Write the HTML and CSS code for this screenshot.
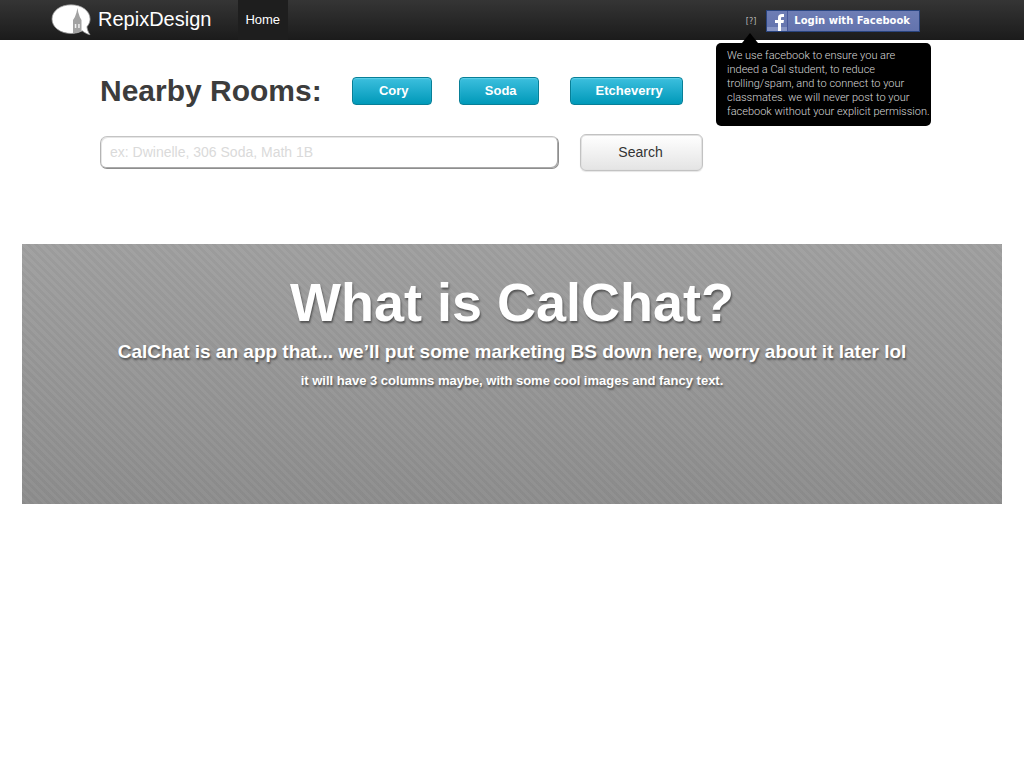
FILE: index.html
```html
<!DOCTYPE html>
<html lang="en">
<head>
<meta charset="utf-8">
<meta name="viewport" content="width=device-width, initial-scale=1">
<title>CalChat</title>
<link rel="stylesheet" href="styles.css">
</head>
<body>
<header class="topbar">
  <a class="brand" href="#">
    <svg class="brand-logo" width="41" height="32" viewBox="0 0 41 32" aria-hidden="true">
      <path d="M20 .8C9.500.8 1 6.800 1 15.100S9.500 29.500 20 29.500c4.200 0 8-1 11.200-2.700 2.300 1.800 4.500 3.200 7.800 3.900-1.700-2.200-2.700-5-3.100-7.900 2-2.300 3.200-5 3.200-7.700C39.100 6.800 30.700.8 20 .8z" fill="#fff" stroke="#999" stroke-width=".8"/>
      <path d="M26.400 4L25.500 8.500l-1.600 4.500-1.900 3v13.200l4.500-.5 4-1.500V16l-1.700-3-1.500-4.500z" fill="#a2a2a2"/>
      <path d="M23.800 20h1.500v4h-1.500zM27.200 20h1.500v4h-1.500z" fill="#f0f0f0"/>
    </svg>
    <span>RepixDesign</span>
  </a>
  <nav class="nav"><a class="nav-link" href="#">Home</a></nav>
  <div class="login">
    <button class="help" type="button" aria-describedby="login-tip">[?]</button>
    <button class="facebook" type="button">
      <svg width="21" height="20" viewBox="0 0 21 20" aria-hidden="true">
        <path d="M0 16h20v4H0z" fill="#8795c4"/>
        <path d="M20.500 0v20" stroke="#47589a"/>
        <path d="M11 20v-8H8V9h3V7c0-3 1.500-4 4-4h2v3h-1.500c-1.200 0-1.500.4-1.500 1.500V9h3l-.5 3H14v8z" fill="#fff"/>
      </svg>
      <span class="facebook-label">Login with Facebook</span>
    </button>
    <p class="tip" id="login-tip" role="tooltip">We use facebook to ensure you are<br>indeed a Cal student, to reduce<br>trolling/spam, and to connect to your<br>classmates. we will never post to your<br>facebook without your explicit permission.</p>
  </div>
</header>
<main>
  <section class="finder">
    <div class="rooms">
      <h1 class="rooms-title">Nearby Rooms:</h1>
      <button class="room" type="button">Cory</button>
      <button class="room" type="button">Soda</button>
      <button class="room room-wide" type="button">Etcheverry</button>
    </div>
    <form class="search">
      <input class="search-box" type="text" aria-label="Search rooms" placeholder="ex: Dwinelle, 306 Soda, Math 1B">
      <button class="search-button" type="button">Search</button>
    </form>
  </section>
  <section class="about">
    <h2 class="about-title">What is CalChat?</h2>
    <p class="about-lead">CalChat is an app that... we’ll put some marketing BS down here, worry about it later lol</p>
    <p class="about-note">it will have 3 columns maybe, with some cool images and fancy text.</p>
  </section>
</main>
</body>
</html>
```
FILE: styles.css
```css
* { box-sizing: border-box; }

body {
  margin: 0;
  background: #fff;
  font-family: "Liberation Sans", Arial, sans-serif;
  color: #3c3c3c;
}

button, input { font-family: inherit; margin: 0; }
h1, h2, p { margin: 0; }

.topbar {
  display: flex;
  align-items: stretch;
  height: 40px;
  padding: 0 104px 0 51px;
  background: linear-gradient(#353535, #1b1b1b);
}

.brand {
  display: flex;
  align-items: center;
  gap: 6px;
  padding-bottom: 1px;
  color: #fff;
  font-size: 20px;
  text-decoration: none;
}

.nav { display: flex; margin-left: 27px; }

.nav-link {
  display: flex;
  align-items: center;
  padding: 0 8px 1px 7px;
  background: #1e1e1e;
  color: #fff;
  font-size: 13px;
  text-decoration: none;
}

.login {
  position: relative;
  display: flex;
  align-items: center;
  gap: 10px;
  margin-left: auto;
  padding-top: 2px;
}

.help {
  padding: 0;
  border: 0;
  background: none;
  color: #b8b8b8;
  font-family: "DejaVu Sans", sans-serif;
  font-size: 8px;
}

.facebook {
  display: flex;
  align-items: center;
  height: 22px;
  padding: 0;
  border: 1px solid #29447e;
  background: linear-gradient(#6d7db5, #6373ad);
  color: #fff;
}

.facebook-label {
  padding: 0 9px 0 6px;
  font-family: "DejaVu Sans", Verdana, sans-serif;
  font-size: 10px;
  font-weight: bold;
  line-height: 20px;
  white-space: nowrap;
}

.tip {
  position: absolute;
  top: 43px;
  right: -11px;
  min-width: 215px;
  padding: 6px 1px 7px 11px;
  border-radius: 5px;
  background: #000;
  color: #d8d8d8;
  font-family: Roboto, sans-serif;
  font-size: 11px;
  font-weight: 300;
  line-height: 14px;
  white-space: nowrap;
}

.tip::before {
  content: "";
  position: absolute;
  top: -10px;
  left: 26px;
  border: solid transparent;
  border-width: 0 8px 10px;
  border-bottom-color: #000;
}

.finder {
  display: flex;
  flex-direction: column;
  gap: 26px;
  padding: 34px 100px 73px;
}

.rooms { display: flex; align-items: center; }

.rooms-title {
  margin-right: 30px;
  font-size: 30px;
  line-height: 34px;
}

.room {
  width: 80px;
  height: 28px;
  margin-right: 27px;
  padding: 0 0 2px 4px;
  border: 1px solid #087f97;
  border-radius: 4px;
  background: linear-gradient(#3cbfde, #0099b9);
  box-shadow: inset 0 1px 1px #5fd0e8;
  color: #fff;
  font-size: 13px;
  font-weight: bold;
}

.room-wide {
  width: 113px;
  margin: 0 0 0 4px;
  padding-left: 6px;
}

.search { display: flex; align-items: center; gap: 21px; }

.search-box {
  width: 459px;
  height: 33px;
  padding: 0 9px 1px;
  border: 1px solid;
  border-color: #c4c4c4 #8e8e8e #8e8e8e #b4b4b4;
  border-radius: 7px;
  background: #fff;
  box-shadow: inset -1px -1px 0 #aaa, inset 1px 1px 0 #e6e6e6;
  font-size: 14px;
}

.search-box::placeholder { color: #dadada; opacity: 1; }

.search-button {
  width: 123px;
  height: 37px;
  padding: 0 2px 1px 0;
  border: 1px solid #c2c2c2;
  border-radius: 6px;
  background: linear-gradient(#fff, #e4e4e4);
  box-shadow: inset 0 0 0 1px #e2e2e2, 0 1px 1px #e6e6e6;
  color: #333;
  font-size: 14px;
}

.about {
  min-height: 260px;
  margin: 0 22px;
  padding: 26px 20px;
  background:
    repeating-linear-gradient(45deg, rgba(0, 0, 0, .04) 0 3px, transparent 3px 6px),
    linear-gradient(#a2a2a2, #909090);
  color: #fff;
  text-align: center;
  text-shadow: 1px 2px 2px rgba(0, 0, 0, .45);
}

.about-title { font-size: 54px; line-height: 64px; }
.about-lead { margin-top: 6px; font-size: 19px; font-weight: bold; line-height: 24px; }
.about-note { margin-top: 8px; font-size: 13px; font-weight: bold; line-height: 18px; }
```
